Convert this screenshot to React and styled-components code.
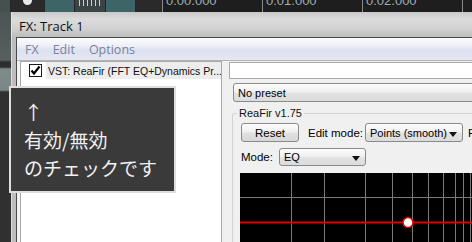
import React from 'react';
import styled, { createGlobalStyle } from 'styled-components';

const GlobalStyle = createGlobalStyle`
  html, body { margin: 0; padding: 0; background: #2a2a2a; }
  * { box-sizing: border-box; }
`;

const Page = styled.div`
  position: relative;
  width: 472px;
  height: 242px;
  overflow: hidden;
  background: #2c2c2c;
  font-family: "Liberation Sans", Arial, sans-serif;
`;

const TopStrip = styled.div`
  display: flex;
  flex: none;
  height: 12px;
  background: #262626;
  overflow: hidden;
`;

const TransportBtn = styled.div`
  width: ${(p) => p.w}px;
  flex: none;
  margin-right: 1px;
  background: ${(p) => p.bg || '#3d6567'};
  display: flex;
  justify-content: center;
  align-items: flex-start;
`;

const RecDot = styled.div`
  width: 9px;
  height: 5px;
  border-radius: 0 0 5px 5px;
  background: #e8e8e8;
`;

const Stripes = styled.div`
  width: 22px;
  height: 6px;
  background: repeating-linear-gradient(90deg, #c8d0d0 0 1px, transparent 1px 4px);
`;

const Timeline = styled.div`
  flex: 1;
  display: flex;
  background: #1e1e1e;
  overflow: hidden;
`;

const TimeMark = styled.div`
  width: 100px;
  flex: none;
  border-left: 1px solid #8a8a8a;
  padding-left: 3px;
  font-size: 13px;
  line-height: 13px;
  color: #a0adb6;
  white-space: nowrap;
`;

const TimeText = styled.div`
  margin-top: -6px;
`;

const Lower = styled.div`
  display: flex;
  height: 230px;
  overflow: hidden;
`;

const SideTrack = styled.div`
  width: 11px;
  flex: none;
  background: linear-gradient(180deg, #4b5454 0, #56605f 48px, #2e2e2e 50px, #2e2e2e 55px, #7f8a8a 57px, #7c8686 78px, #303030 80px);
`;

const Window = styled.div`
  width: 600px;
  flex: none;
  display: flex;
  flex-direction: column;
  overflow: hidden;
`;

const TitleBar = styled.div`
  flex: none;
  height: 25px;
  padding: 3px 0 0 7px;
  display: flex;
  align-items: center;
  background: linear-gradient(180deg, #c9c9c9 0, #dcdcdc 30%, #cfcfcf 70%, #bdbdbd 100%);
  border-left: 1px solid #e6e6e6;
  font-family: "Open Sans", "Noto Sans", sans-serif;
  font-size: 13px;
  color: #111;
`;

const Frame = styled.div`
  flex: 1;
  display: flex;
  background: #bdbdbd;
  border-left: 1px solid #dcdcdc;
  padding-left: 4px;
`;

const Client = styled.div`
  flex: 1;
  display: flex;
  flex-direction: column;
  border-top: 1px solid #4a4a4a;
  border-left: 1px solid #4a4a4a;
  background: #f0f0f0;
`;

const MenuBar = styled.div`
  flex: none;
  height: 23px;
  display: flex;
  align-items: center;
  gap: 14px;
  padding-left: 8px;
  background: linear-gradient(180deg, #fbfcfe 0, #eef0f8 35%, #dde2f1 55%, #e4e7f3 100%);
  border-bottom: 1px solid #b4b4b4;
  font-family: "Open Sans", "Noto Sans", sans-serif;
  font-size: 12.5px;
  color: #7b809c;
`;

const Body = styled.div`
  flex: 1;
  display: flex;
  gap: 7px;
  padding-left: 3px;
`;

const FxList = styled.div`
  width: 202px;
  flex: none;
  background: #fff;
  border: 1px solid #a8a8a8;
  border-bottom: none;
`;

const FxRow = styled.div`
  display: flex;
  align-items: center;
  height: 17px;
  padding-left: 8px;
`;

const CheckBox = styled.div`
  width: 13px;
  height: 13px;
  flex: none;
  border: 1px solid #1a1a1a;
  background: #fff;
  display: flex;
  align-items: center;
  justify-content: center;
`;

const FxName = styled.div`
  flex: 1;
  margin-left: 4px;
  height: 17px;
  display: flex;
  align-items: center;
  padding-left: 2px;
  background: #ededed;
  font-size: 10.5px;
  color: #111;
  white-space: nowrap;
  overflow: hidden;
`;

const RightPane = styled.div`
  flex: 1;
  display: flex;
  flex-direction: column;
  padding-top: 1px;
  font-size: 11px;
  color: #000;
`;

const TextBox = styled.div`
  flex: none;
  height: 17px;
  background: #fff;
  border: 1px solid #a9a9a9;
  border-right: none;
`;

const Select = styled.div`
  width: ${(p) => (p.w ? `${p.w}px` : 'auto')};
  flex: none;
  height: ${(p) => p.h || 19}px;
  margin-left: ${(p) => p.ml || 0}px;
  margin-top: ${(p) => p.mt || 0}px;
  display: flex;
  align-items: center;
  justify-content: space-between;
  padding: 0 5px 0 4px;
  border: 1px solid #8a8a8a;
  border-radius: 3px;
  background: linear-gradient(180deg, #fdfdfd 0, #f1f1f1 45%, #e2e2e2 55%, #dcdcdc 100%);
  font-size: 11px;
  white-space: nowrap;
`;

const Arrow = styled.span`
  width: 0;
  height: 0;
  margin-top: 3px;
  border-left: 4px solid transparent;
  border-right: 4px solid transparent;
  border-top: 5px solid #111;
`;

const Group = styled.fieldset`
  flex: none;
  margin: 5px 0 0 3px;
  padding: 3px 0 0 8px;
  border: 1px solid #cdd4da;
  border-right: none;
  border-bottom: none;
  border-radius: 3px 0 0 0;
  min-width: 0;
`;

const Legend = styled.legend`
  margin-left: -4px;
  padding: 0 2px;
  font-size: 11px;
  line-height: 13px;
  color: #111;
`;

const Row = styled.div`
  display: flex;
  align-items: center;
  height: ${(p) => p.h}px;
  margin-top: ${(p) => p.mt || 0}px;
  white-space: nowrap;
`;

const Button = styled.div`
  width: 58px;
  flex: none;
  height: 19px;
  display: flex;
  align-items: center;
  justify-content: center;
  border: 1px solid #8a8a8a;
  border-radius: 3px;
  background: linear-gradient(180deg, #fdfdfd 0, #f0f0f0 45%, #e0e0e0 55%, #d8d8d8 100%);
  font-size: 11.5px;
`;

const Label = styled.span`
  width: ${(p) => p.w}px;
  flex: none;
  margin-left: ${(p) => p.ml || 0}px;
  font-size: 11.5px;
`;

const Graph = styled.div`
  margin: 8px 0 0 -1px;
  height: 72px;
  background: #000;
`;

const Tooltip = styled.div`
  position: absolute;
  left: 9px;
  top: 86px;
  width: 167px;
  height: 107px;
  padding: 10px 0 0 13px;
  border: 2px solid #dedede;
  background: #3a3a3a;
  color: #f2f2f2;
  font-family: "Noto Sans CJK JP", "Noto Sans", sans-serif;
  font-size: 19px;
  line-height: 28px;
`;

const gridX = [291, 324, 365, 392, 412, 428, 443, 455, 463, 470];

const App = () => (
  <Page>
    <GlobalStyle />
    <TopStrip>
      <TransportBtn w={10} bg="#46504f" />
      <TransportBtn w={33} bg="#2a2a2a">
        <RecDot />
      </TransportBtn>
      <TransportBtn w={29} />
      <TransportBtn w={30} bg="#3a4444">
        <Stripes />
      </TransportBtn>
      <TransportBtn w={29} />
      <TransportBtn w={25} bg="#2a2a2a" />
      <Timeline>
        <TimeMark><TimeText>0:00.000</TimeText></TimeMark>
        <TimeMark><TimeText>0:01.000</TimeText></TimeMark>
        <TimeMark><TimeText>0:02.000</TimeText></TimeMark>
        <TimeMark />
      </Timeline>
    </TopStrip>
    <Lower>
      <SideTrack />
      <Window>
        <TitleBar>FX: Track 1</TitleBar>
        <Frame>
          <Client>
            <MenuBar>
              <span>FX</span>
              <span>Edit</span>
              <span>Options</span>
            </MenuBar>
            <Body>
              <FxList>
                <FxRow>
                  <CheckBox>
                    <svg width="11" height="11" viewBox="0 0 11 11">
                      <polyline points="1.5,5.5 4,8.5 9.5,1.5" fill="none" stroke="#000" strokeWidth="2.2" />
                    </svg>
                  </CheckBox>
                  <FxName>VST: ReaFir (FFT EQ+Dynamics Pr...</FxName>
                </FxRow>
              </FxList>
              <RightPane>
                <TextBox />
                <Select ml={4} mt={4}>No preset</Select>
                <Group>
                  <Legend>ReaFir v1.75</Legend>
                  <Row h={19}>
                    <Button>Reset</Button>
                    <Label ml={9} w={57}>Edit mode:</Label>
                    <Select w={98}>
                      Points (smooth)
                      <Arrow />
                    </Select>
                    <Label ml={5} w={10}>F</Label>
                  </Row>
                  <Row h={17} mt={6}>
                    <Label w={38}>Mode:</Label>
                    <Select w={87} h={18}>
                      EQ
                      <Arrow />
                    </Select>
                  </Row>
                  <Graph>
                    <svg width="240" height="72" viewBox="240 171 240 72">
                      {gridX.map((x) => (
                        <line key={x} x1={x + 0.5} y1="171" x2={x + 0.5} y2="243" stroke="#7a7a7a" strokeWidth="1" />
                      ))}
                      <line x1="240" y1="195.5" x2="480" y2="195.5" stroke="#7a7a7a" strokeWidth="1" />
                      <line x1="240" y1="220.5" x2="480" y2="220.5" stroke="#e00000" strokeWidth="2" />
                      <circle cx="408" cy="220.5" r="5" fill="#fff" stroke="#e00000" strokeWidth="1.5" />
                    </svg>
                  </Graph>
                </Group>
              </RightPane>
            </Body>
          </Client>
        </Frame>
      </Window>
    </Lower>
    <Tooltip>
      <div>↑</div>
      <div>有効/無効</div>
      <div>のチェックです</div>
    </Tooltip>
  </Page>
);

export default App;
